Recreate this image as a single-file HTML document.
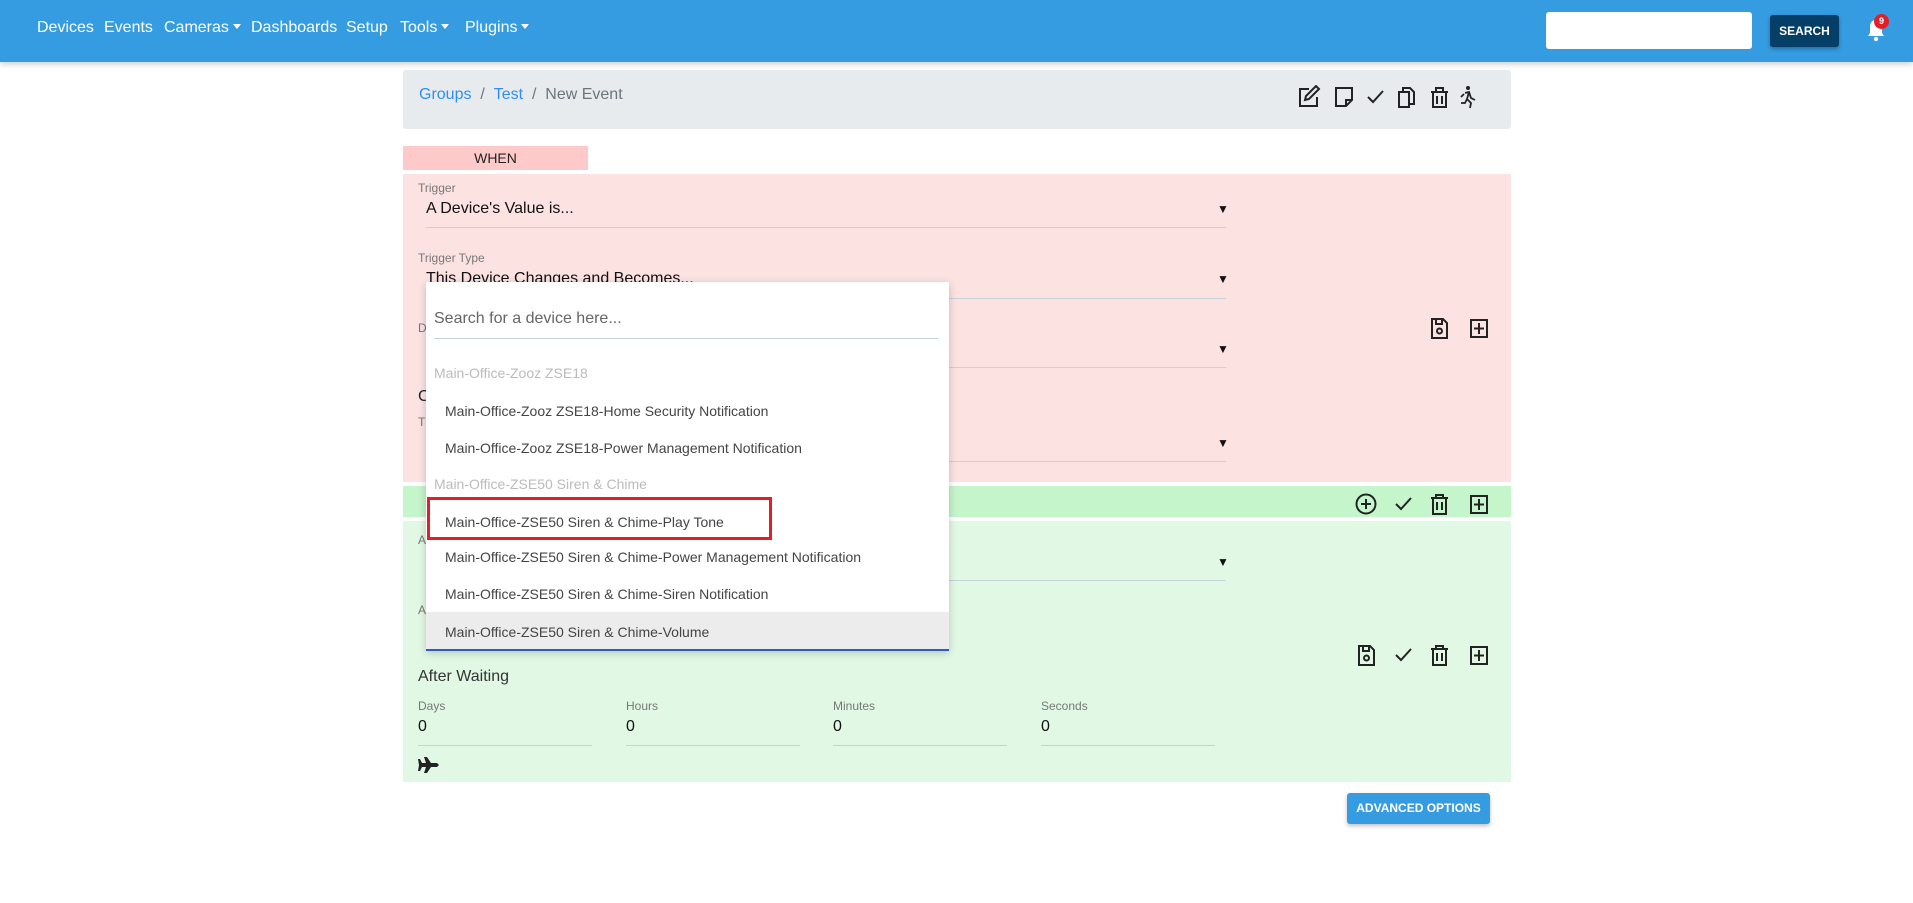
<!DOCTYPE html>
<html><head><meta charset="utf-8"><style>
*{box-sizing:border-box;margin:0;padding:0}
body{width:1913px;height:903px;position:relative;background:#fff;font-family:"Liberation Sans",sans-serif;overflow:hidden;color:#212529}
.a{position:absolute;white-space:nowrap}
.nav{left:0;top:0;width:1913px;height:62px;background:#359ce2;box-shadow:0 2px 6px rgba(0,0,0,.2)}
.ni{color:#fff;font-size:16px;top:19px}
.car:after{content:"";display:inline-block;margin-left:4px;vertical-align:3px;border-left:4px solid transparent;border-right:4px solid transparent;border-top:5px solid #fff}
.lbl{font-size:12px;color:#777}
.val{font-size:16px;color:#111}
.ul{height:1px;background:#c8d2da}
.arr{font-size:12px;color:#111}
.it{left:445px;font-size:14px;color:#444}
.gh{left:434px;font-size:14px;color:#bbb}
svg{position:absolute}
</style></head><body>
<div class="a nav"></div>
<div class="a ni" style="left:37px">Devices</div>
<div class="a ni" style="left:104px">Events</div>
<div class="a ni car" style="left:164px">Cameras</div>
<div class="a ni" style="left:251px">Dashboards</div>
<div class="a ni" style="left:346px">Setup</div>
<div class="a ni car" style="left:400px">Tools</div>
<div class="a ni car" style="left:465px">Plugins</div>
<div class="a" style="left:1546px;top:12px;width:206px;height:37px;background:#fff;border-radius:3px"></div>
<div class="a" style="left:1770px;top:15px;width:69px;height:32px;background:#053e66;border-radius:3px;color:#fff;font-size:12px;font-weight:bold;text-align:center;line-height:32px;box-shadow:0 2px 4px rgba(0,0,0,.3)">SEARCH</div>
<svg style="left:1865px;top:18px" width="22" height="24" viewBox="0 0 22 24"><path d="M11 2c-4 0-6 3-6 7v6l-2 3h16l-2-3V9c0-4-2-7-6-7z" fill="#fff"/><circle cx="11" cy="21" r="2.2" fill="#fff"/></svg>
<div class="a" style="left:1874px;top:14px;width:15px;height:15px;border-radius:50%;background:#e41e26;color:#fff;font-size:9px;font-weight:bold;text-align:center;line-height:15px">9</div>

<div class="a" style="left:403px;top:70px;width:1108px;height:59px;background:#e8ebee;border-radius:3px"></div>
<div class="a" style="left:419px;top:86px;font-size:16px;color:#6c757d"><span style="color:#2f8ef0">Groups</span>&nbsp; / &nbsp;<span style="color:#2f8ef0">Test</span>&nbsp; / &nbsp;New Event</div>
<svg style="left:1296px;top:85px" width="185" height="24" viewBox="0 0 185 24" fill="none" stroke="#222" stroke-width="2">
<path d="M13 4H4v17h17v-9"/><path d="M9 15l1-4 10-10 3 3-10 10z"/>
<path d="M40 3h16v12l-6 6H40z"/><path d="M56 15h-6v6"/>
<path d="M72 12l5 5 10-11"/>
<path d="M103 7h10v15h-10z"/><path d="M107 7V3h7l4 4v12h-5"/>
<path d="M135 7h17"/><path d="M140 7V3h7v4"/><path d="M137 7v15h13V7"/><path d="M141 11v8M146 11v8"/>
<circle cx="172" cy="3" r="2" fill="#222" stroke="none"/><path d="M169 8l4-1 2 6 4 2M173 7l-2 7 4 4-1 5M171 14l-2 4h-4M168 9l-3 3" stroke-width="1.8"/>
</svg>

<div class="a" style="left:403px;top:146px;width:185px;height:24px;background:#fdc9c9;text-align:center;font-size:14px;line-height:24px;color:#222">WHEN</div>
<div class="a" style="left:403px;top:174px;width:1108px;height:308px;background:#fde2e2"></div>
<div class="a lbl" style="left:418px;top:181px">Trigger</div>
<div class="a val" style="left:426px;top:200px">A Device's Value is...</div>
<div class="a arr" style="left:1217px;top:202px">▼</div>
<div class="a ul" style="left:426px;top:227px;width:800px"></div>
<div class="a lbl" style="left:418px;top:251px">Trigger Type</div>
<div class="a val" style="left:426px;top:270px">This Device Changes and Becomes...</div>
<div class="a arr" style="left:1217px;top:272px">▼</div>
<div class="a ul" style="left:426px;top:298px;width:800px"></div>
<div class="a lbl" style="left:418px;top:321px">D</div>
<div class="a arr" style="left:1217px;top:342px">▼</div>
<div class="a ul" style="left:426px;top:367px;width:800px"></div>
<div class="a" style="left:418px;top:388px;font-size:16px">C</div>
<div class="a lbl" style="left:418px;top:415px">T</div>
<div class="a arr" style="left:1217px;top:436px">▼</div>
<div class="a ul" style="left:426px;top:461px;width:800px"></div>
<svg style="left:1428px;top:317px" width="62" height="22" viewBox="0 0 62 22" fill="none" stroke="#222" stroke-width="2">
<path d="M4 2h11l4 4v15H4z"/><path d="M8 2v5h6V2"/><circle cx="11.5" cy="14" r="2.5"/>
<rect x="43" y="3" width="16" height="17"/><path d="M51 6v11M46 11.5h10"/></svg>

<div class="a" style="left:403px;top:486px;width:1108px;height:31px;background:#c4f5cb"></div>
<svg style="left:1354px;top:492px" width="136" height="24" viewBox="0 0 136 24" fill="none" stroke="#222" stroke-width="2">
<circle cx="12" cy="12" r="9.5"/><path d="M12 7v10M7 12h10"/>
<path d="M42 12l5 5 10-11"/>
<path d="M77 6h17"/><path d="M82 6V3h7v3"/><path d="M79 6v16h13V6"/><path d="M83 10v8M88 10v8"/>
<rect x="117" y="4" width="16" height="17"/><path d="M125 7v11M120 12.5h10"/></svg>
<div class="a" style="left:403px;top:521px;width:1108px;height:261px;background:#e1f9e4"></div>
<div class="a lbl" style="left:418px;top:533px">A</div>
<div class="a arr" style="left:1217px;top:555px">▼</div>
<div class="a ul" style="left:426px;top:580px;width:800px"></div>
<div class="a lbl" style="left:418px;top:603px">A</div>
<svg style="left:1356px;top:643px" width="136" height="24" viewBox="0 0 136 24" fill="none" stroke="#222" stroke-width="2">
<path d="M3 3h11l4 4v15H3z"/><path d="M7 3v5h6V3"/><circle cx="10.5" cy="15" r="2.5"/>
<path d="M40 12l5 5 10-11"/>
<path d="M75 6h17"/><path d="M80 6V3h7v3"/><path d="M77 6v16h13V6"/><path d="M81 10v8M86 10v8"/>
<rect x="115" y="4" width="16" height="17"/><path d="M123 7v11M118 12.5h10"/></svg>
<div class="a" style="left:418px;top:668px;font-size:16px;color:#333">After Waiting</div>
<div class="a lbl" style="left:418px;top:699px">Days</div><div class="a val" style="left:418px;top:718px">0</div><div class="a ul" style="left:418px;top:745px;width:174px"></div>
<div class="a lbl" style="left:626px;top:699px">Hours</div><div class="a val" style="left:626px;top:718px">0</div><div class="a ul" style="left:626px;top:745px;width:174px"></div>
<div class="a lbl" style="left:833px;top:699px">Minutes</div><div class="a val" style="left:833px;top:718px">0</div><div class="a ul" style="left:833px;top:745px;width:174px"></div>
<div class="a lbl" style="left:1041px;top:699px">Seconds</div><div class="a val" style="left:1041px;top:718px">0</div><div class="a ul" style="left:1041px;top:745px;width:174px"></div>
<svg style="left:417px;top:757px" width="22" height="16" viewBox="0 0 22 16"><path d="M1 2h2l2 4h4L7 0h3l4 6h6l2 2-2 2h-6l-4 6H7l2-6H5l-2 4H1l1-6z" fill="#222"/></svg>
<div class="a" style="left:1347px;top:793px;width:143px;height:31px;background:#359ce2;border-radius:3px;color:#fff;font-size:12px;font-weight:bold;text-align:center;line-height:31px;box-shadow:0 2px 4px rgba(0,0,0,.25)">ADVANCED OPTIONS</div>

<div class="a" style="left:426px;top:282px;width:523px;height:369px;background:#fff;box-shadow:0 2px 8px rgba(0,0,0,.2);border-bottom:2px solid #2e5cc4"></div>
<div class="a" style="left:434px;top:310px;font-size:16px;color:#666">Search for a device here...</div>
<div class="a ul" style="left:434px;top:338px;width:504px"></div>
<div class="gh a" style="top:365px">Main-Office-Zooz ZSE18</div>
<div class="it a" style="top:403px">Main-Office-Zooz ZSE18-Home Security Notification</div>
<div class="it a" style="top:440px">Main-Office-Zooz ZSE18-Power Management Notification</div>
<div class="gh a" style="top:476px">Main-Office-ZSE50 Siren &amp; Chime</div>
<div class="it a" style="top:514px">Main-Office-ZSE50 Siren &amp; Chime-Play Tone</div>
<div class="it a" style="top:549px">Main-Office-ZSE50 Siren &amp; Chime-Power Management Notification</div>
<div class="it a" style="top:586px">Main-Office-ZSE50 Siren &amp; Chime-Siren Notification</div>
<div class="a" style="left:426px;top:612px;width:523px;height:37px;background:#ececec"></div>
<div class="it a" style="top:624px">Main-Office-ZSE50 Siren &amp; Chime-Volume</div>
<div class="a" style="left:427px;top:497px;width:345px;height:43px;border:3.5px solid #e41e26"></div>
</body></html>
